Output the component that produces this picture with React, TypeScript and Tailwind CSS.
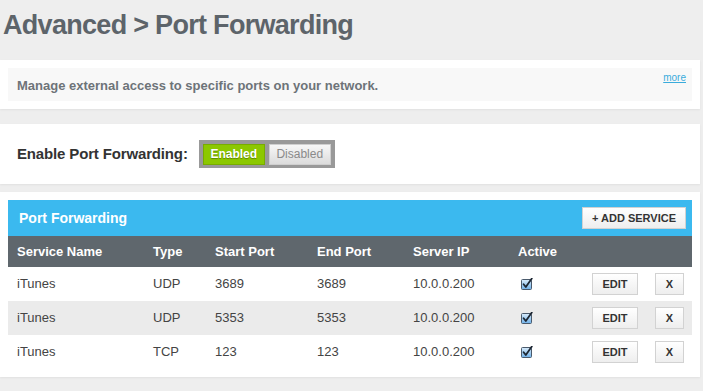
import React from "react";

const rows = [
  { name: "iTunes", type: "UDP", start: "3689", end: "3689", ip: "10.0.0.200" },
  { name: "iTunes", type: "UDP", start: "5353", end: "5353", ip: "10.0.0.200" },
  { name: "iTunes", type: "TCP", start: "123", end: "123", ip: "10.0.0.200" },
];

const cols = "grid grid-cols-[136px_62px_102px_96px_105px_74px_63px_1fr] items-center pl-[9px]";

function Checked() {
  return (
    <svg width="12" height="12" viewBox="0 0 12 12" className="block">
      <defs>
        <linearGradient id="cb" x1="0" y1="0" x2="0" y2="1">
          <stop offset="0" stopColor="#d9ecfb" />
          <stop offset="1" stopColor="#6fb0e8" />
        </linearGradient>
      </defs>
      <rect x="0.5" y="1.5" width="10" height="10" rx="1" fill="url(#cb)" stroke="#4a5a6c" />
      <path d="M2.6 6.2 L4.8 9 L10.8 0.6" fill="none" stroke="#1d2733" strokeWidth="1.8" strokeLinecap="round" strokeLinejoin="round" />
    </svg>
  );
}

function SmallButton({ children, className }: { children: React.ReactNode; className: string }) {
  return (
    <button type="button" className={`h-[22px] border border-[#d2d2d2] bg-gradient-to-b from-white to-[#eeeeee] text-[11px] font-bold text-[#333] ${className}`}>{children}</button>
  );
}

export default function App() {
  return (
    <div className="min-h-[391px] w-[703px] bg-[#eeeeee] font-['Liberation_Sans',Arial,sans-serif]">
      <h1 className="px-[3px] pt-[9px] text-[27px] font-bold leading-[32px] tracking-[-0.7px] text-[#5d646a]">Advanced &gt; Port Forwarding</h1>

      <div className="mt-[19px] w-[700px] bg-white p-[8px] shadow-[0_1px_2px_rgba(0,0,0,0.06)]">
        <div className="flex h-[33px] justify-between bg-[#f8f8f8] pl-[9px] pr-[6px]">
          <p className="self-center pt-[2px] text-[13px] font-bold text-[#6d7378]">Manage external access to specific ports on your network.</p>
          <a href="#" className="mt-[4px] text-[10px] leading-[12px] text-[#3aacdc] underline">more</a>
        </div>
      </div>

      <div className="mt-[15px] flex h-[60px] w-[700px] items-center bg-white pl-[17px] shadow-[0_1px_2px_rgba(0,0,0,0.06)]">
        <span className="text-[15px] font-bold tracking-[-0.15px] text-[#333]">Enable Port Forwarding:</span>
        <div className="ml-[11px] flex h-[28px] w-[136px] items-center gap-[4px] bg-[#999999] px-[4px]">
          <span className="flex h-[21px] w-[62px] items-center justify-center border border-[#78ac00] bg-[#8cc800] text-[12px] font-bold text-white [text-shadow:0_1px_1px_rgba(0,0,0,0.35)]">Enabled</span>
          <span className="flex h-[21px] w-[62px] items-center justify-center border border-[#cfcfcf] bg-gradient-to-b from-[#f7f7f7] to-[#dcdcdc] text-[12px] text-[#8a8a8a]">Disabled</span>
        </div>
      </div>

      <div className="mt-[8px] w-[700px] bg-white px-[8px] pt-[8px] pb-[8px] shadow-[0_1px_2px_rgba(0,0,0,0.06)]">
        <div className="flex h-[36px] items-center justify-between bg-[#3bb9ef] pl-[11px] pr-[6px]">
          <span className="text-[14px] font-bold text-white">Port Forwarding</span>
          <button type="button" className="h-[22px] w-[104px] border border-[#d2d2d2] bg-gradient-to-b from-white to-[#eeeeee] text-[11px] font-bold text-[#333]">+ ADD SERVICE</button>
        </div>
        <div className={`${cols} h-[31px] bg-[#5f676d] text-[13px] font-bold text-white`}>
          <span>Service Name</span>
          <span>Type</span>
          <span>Start Port</span>
          <span>End Port</span>
          <span>Server IP</span>
          <span>Active</span>
          <span />
          <span />
        </div>
        {rows.map((row, i) => (
          <div key={i} className={`${cols} h-[34px] text-[13px] text-[#444] ${i % 2 === 1 ? "bg-[#ebebeb]" : "bg-white"}`}>
            <span>{row.name}</span>
            <span>{row.type}</span>
            <span>{row.start}</span>
            <span>{row.end}</span>
            <span>{row.ip}</span>
            <span className="pl-[3px]"><Checked /></span>
            <span><SmallButton className="w-[46px]">EDIT</SmallButton></span>
            <span><SmallButton className="w-[29px]">X</SmallButton></span>
          </div>
        ))}
      </div>
    </div>
  );
}
